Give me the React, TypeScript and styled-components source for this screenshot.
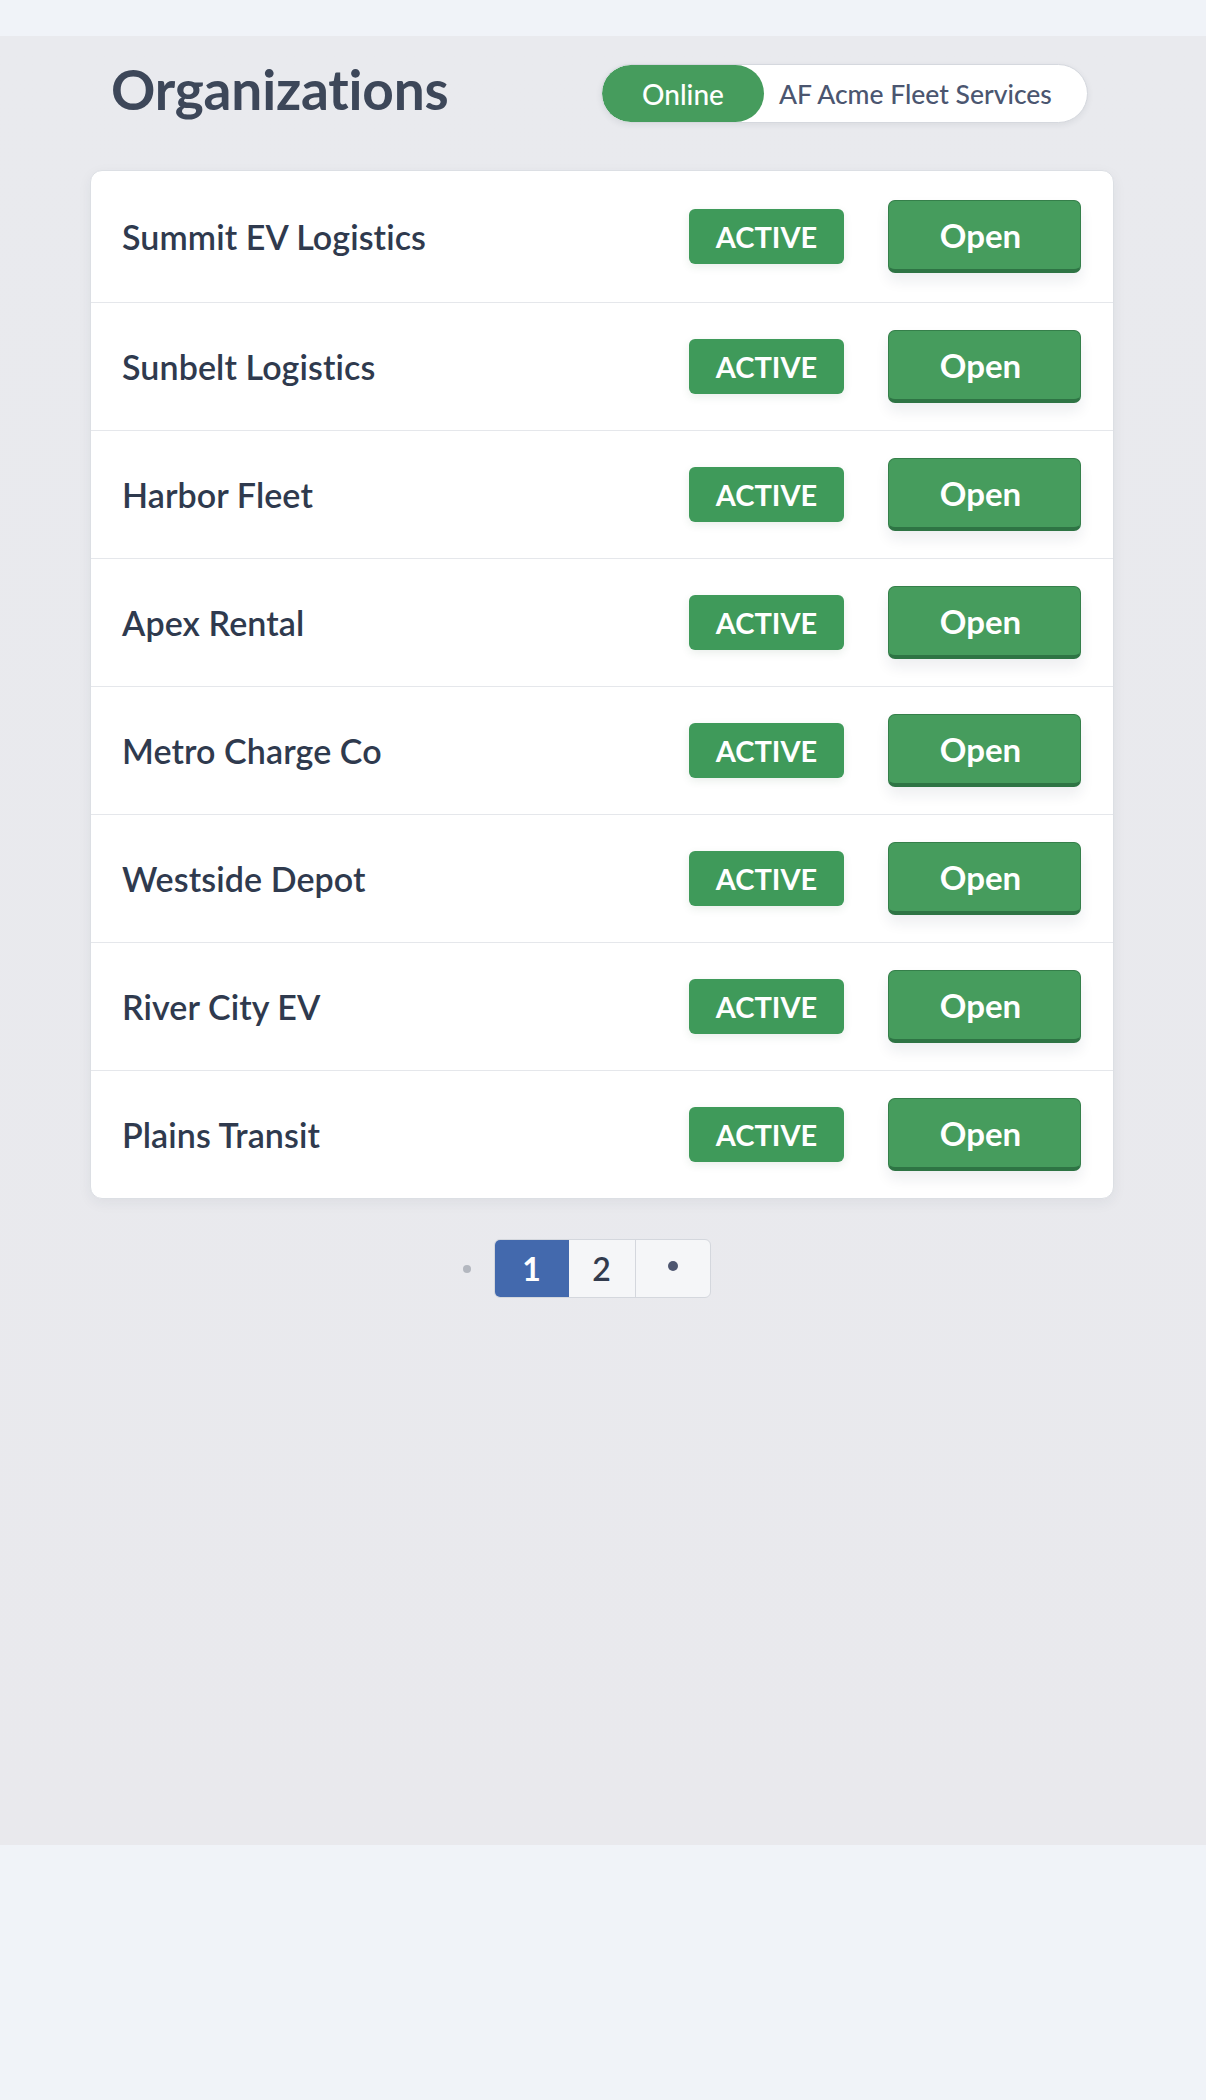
import React from "react";
import styled, { createGlobalStyle } from "styled-components";

const Global = createGlobalStyle`
  html, body { margin: 0; padding: 0; background: #f0f3f8; }
  body { font-family: Lato, "Noto Sans", sans-serif; -webkit-font-smoothing: antialiased; }
  * { box-sizing: border-box; }
`;

const Page = styled.div`
  padding-top: 36px;
  background: #f0f3f8;
  min-height: 2100px;
`;

const Main = styled.main`
  background: linear-gradient(180deg, #e9eaee 0%, #e9e9ed 100%);
  height: 1809px;
  padding-top: 28px;
`;

const Container = styled.div`
  width: 1024px;
  margin-left: 90px;
`;

const Header = styled.header`
  display: flex;
  align-items: center;
  justify-content: space-between;
  height: 59px;
  padding: 0 26px 0 21px;
  margin-bottom: 47px;
`;

const Title = styled.h1`
  margin: 0;
  font-size: 55px;
  font-weight: 700;
  color: #3d4759;
  letter-spacing: -0.2px;
  line-height: 1;
  transform: translateY(-4px);
`;

const StatusPill = styled.div`
  display: flex;
  align-items: center;
  width: 487px;
  height: 59px;
  background: #ffffff;
  border: 1px solid #d5d8de;
  border-radius: 30px;
  box-shadow: 0 2px 6px rgba(40, 50, 70, 0.08);
  overflow: hidden;
`;

const OnlineTag = styled.span`
  display: flex;
  align-items: center;
  justify-content: center;
  width: 162px;
  height: 100%;
  background: #469c5d;
  color: #ffffff;
  border-radius: 30px;
  font-size: 28px;
  font-weight: 500;
`;

const OrgName = styled.span`
  padding-left: 15px;
  font-size: 26.5px;
  font-weight: 500;
  color: #4b5670;
  white-space: nowrap;
`;

const Card = styled.section`
  background: #ffffff;
  border: 1px solid #dcdfe4;
  border-radius: 12px;
  box-shadow: 0 4px 14px rgba(40, 50, 70, 0.06);
  overflow: hidden;
`;

const Row = styled.div<{ $first?: boolean }>`
  display: flex;
  align-items: center;
  height: ${(p) => (p.$first ? "131px" : "128px")};
  padding: 0 32px 0 31px;
  border-top: ${(p) => (p.$first ? "none" : "1px solid #e5e7eb")};
`;

const Name = styled.span`
  flex: 1;
  font-size: 34px;
  font-weight: 600;
  color: #2f3a4e;
  letter-spacing: 0.1px;
`;

const Badge = styled.span`
  display: flex;
  align-items: center;
  justify-content: center;
  width: 155px;
  height: 55px;
  background: #3f9a5a;
  color: #ffffff;
  border-radius: 6px;
  font-size: 29px;
  font-weight: 700;
  box-shadow: 0 3px 8px rgba(40, 90, 50, 0.1);
`;

const OpenButton = styled.button`
  margin-left: 44px;
  width: 193px;
  height: 73px;
  background: #469c5d;
  color: #ffffff;
  border: 1px solid #357f4a;
  border-bottom: 4px solid #2e7444;
  border-radius: 7px;
  font-family: inherit;
  font-size: 33px;
  font-weight: 700;
  box-shadow: 0 8px 14px rgba(30, 40, 60, 0.08);
  cursor: pointer;
  padding: 0 8px 0 0;
`;

const Pager = styled.nav`
  display: grid;
  grid-template-columns: 1fr auto 1fr;
  align-items: center;
  margin-top: 40px;
`;

const PrevDot = styled.span`
  justify-self: end;
  width: 8px;
  height: 8px;
  margin-right: 23px;
  border-radius: 50%;
  background: #b3b7bf;
`;

const PageGroup = styled.div`
  display: flex;
  height: 59px;
  border: 1px solid #d4d7dd;
  border-radius: 6px;
  background: #f5f6f8;
  overflow: hidden;
`;

const PageCell = styled.span<{ $w: number; $active?: boolean; $divider?: boolean }>`
  display: flex;
  align-items: center;
  justify-content: center;
  width: ${(p) => p.$w}px;
  height: 100%;
  font-size: 32px;
  font-weight: ${(p) => (p.$active ? 700 : 600)};
  color: ${(p) => (p.$active ? "#ffffff" : "#323b4d")};
  background: ${(p) => (p.$active ? "#4369ad" : "transparent")};
  border-left: ${(p) => (p.$divider ? "1px solid #d4d7dd" : "none")};
`;

const MoreDot = styled.span`
  width: 10px;
  height: 10px;
  border-radius: 50%;
  background: #4e5670;
  margin-top: -6px;
`;

const orgs = [
  "Summit EV Logistics",
  "Sunbelt Logistics",
  "Harbor Fleet",
  "Apex Rental",
  "Metro Charge Co",
  "Westside Depot",
  "River City EV",
  "Plains Transit",
];

export default function App() {
  return (
    <>
      <Global />
      <Page>
        <Main>
          <Container>
            <Header>
              <Title>Organizations</Title>
              <StatusPill>
                <OnlineTag>Online</OnlineTag>
                <OrgName>AF Acme Fleet Services</OrgName>
              </StatusPill>
            </Header>
            <Card>
              {orgs.map((o, i) => (
                <Row key={o} $first={i === 0}>
                  <Name>{o}</Name>
                  <Badge>ACTIVE</Badge>
                  <OpenButton>Open</OpenButton>
                </Row>
              ))}
            </Card>
            <Pager>
              <PrevDot />
              <PageGroup>
                <PageCell $w={74} $active>1</PageCell>
                <PageCell $w={66}>2</PageCell>
                <PageCell $w={75} $divider>
                  <MoreDot />
                </PageCell>
              </PageGroup>
              <span />
            </Pager>
          </Container>
        </Main>
      </Page>
    </>
  );
}
